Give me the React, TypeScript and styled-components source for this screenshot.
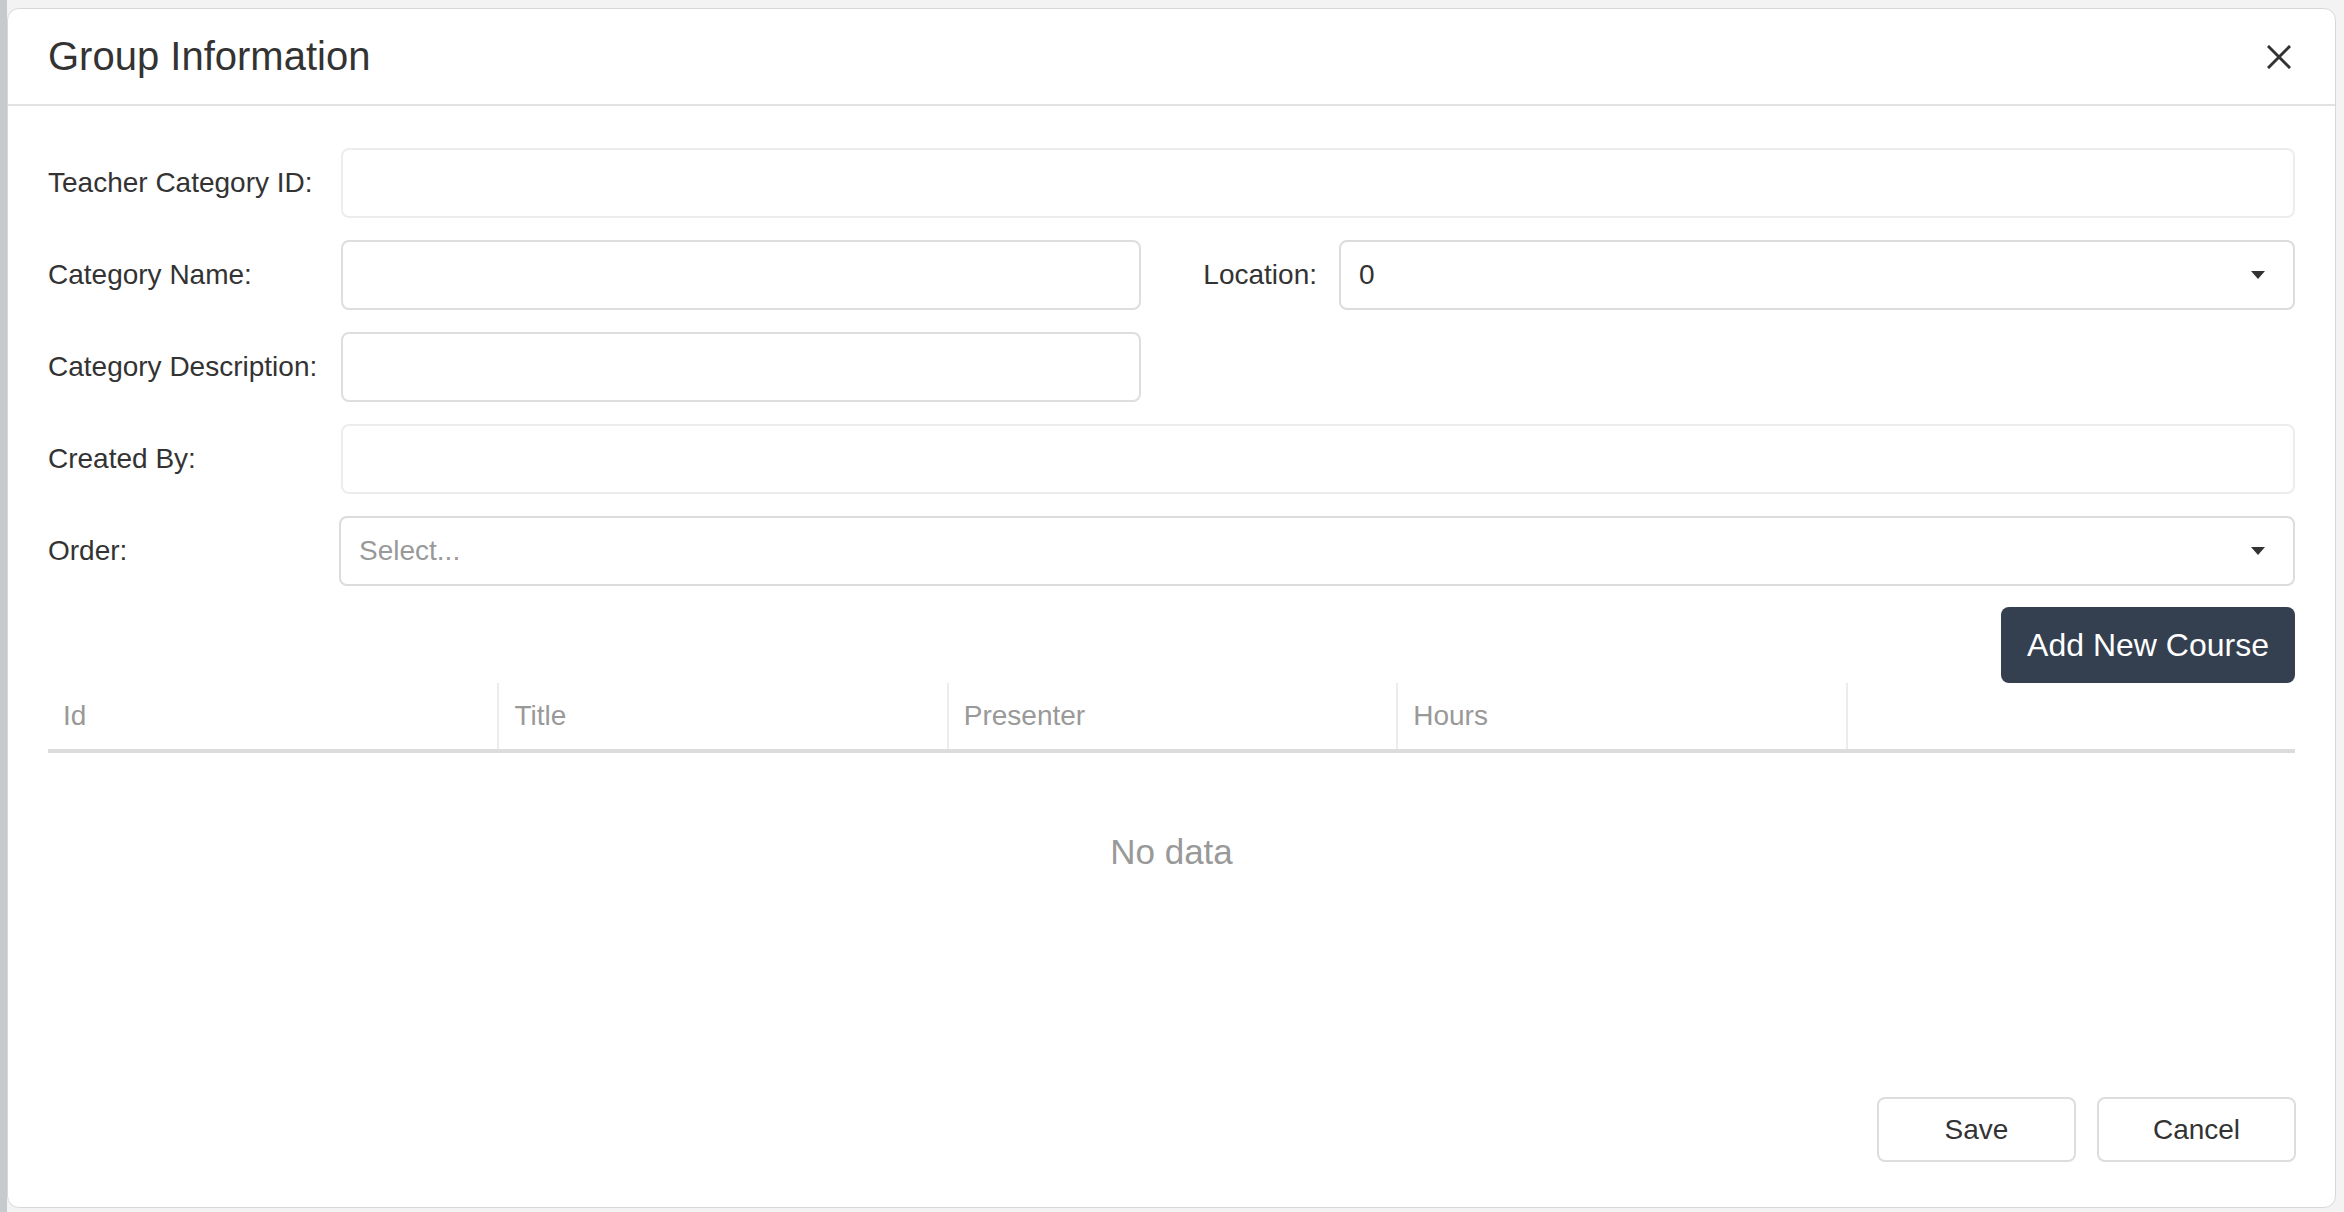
import styled, { createGlobalStyle } from "styled-components";

const GlobalStyle = createGlobalStyle`
  html, body {
    margin: 0;
    padding: 0;
  }
  body {
    font-family: "Liberation Sans", Arial, sans-serif;
    color: #333;
  }
  * {
    box-sizing: border-box;
  }
`;

const Backdrop = styled.div`
  height: 100vh;
  padding: 8px 8px 4px 7px;
  background: linear-gradient(to right, #c6cacd 0 7px, #f3f3f3 7px);
  display: flex;
`;

const Modal = styled.div`
  flex: 1;
  display: flex;
  flex-direction: column;
  background: #fff;
  border: 1px solid #d8d8d8;
  border-radius: 12px;
  overflow: hidden;
`;

const Header = styled.div`
  height: 97px;
  padding: 0 44px 0 40px;
  display: flex;
  align-items: center;
  justify-content: space-between;
  border-bottom: 2px solid #e2e2e2;
`;

const Title = styled.h2`
  margin: 0;
  font-size: 40px;
  font-weight: 400;
  color: #333;
`;

const CloseButton = styled.button`
  border: 0;
  background: none;
  padding: 0;
  width: 24px;
  height: 24px;
  display: flex;
  cursor: pointer;
`;

const Body = styled.div`
  flex: 1;
  padding: 42px 40px 0 40px;
  display: flex;
  flex-direction: column;
`;

const Row = styled.div`
  display: flex;
  align-items: center;
  height: 70px;
  margin-bottom: 22px;
`;

const Label = styled.label`
  width: 293px;
  flex-shrink: 0;
  font-size: 28px;
  color: #333;
`;

const SideLabel = styled(Label)`
  width: 198px;
  padding-right: 22px;
  text-align: right;
`;

const Input = styled.input<{ $half?: boolean; $muted?: boolean }>`
  height: 70px;
  flex: ${(p) => (p.$half ? "0 0 800px" : "1")};
  border: 2px solid ${(p) => (p.$muted ? "#ededed" : "#dedede")};
  border-radius: 8px;
  background: #fff;
  padding: 0 18px;
  font: inherit;
  font-size: 28px;
  outline: none;
`;

const Select = styled.div<{ $placeholder?: boolean; $shift?: number }>`
  flex: 1;
  height: 70px;
  margin-left: ${(p) => p.$shift ?? 0}px;
  border: 2px solid #dcdcdc;
  border-radius: 8px;
  padding: 0 28px 0 18px;
  display: flex;
  align-items: center;
  justify-content: space-between;
  font-size: 28px;
  color: ${(p) => (p.$placeholder ? "#999" : "#333")};
`;

const Arrow = () => (
  <svg width="14" height="8" viewBox="0 0 14 8">
    <path d="M0 0 H14 L7 8 Z" fill="#333" />
  </svg>
);

const ActionRow = styled.div`
  display: flex;
  justify-content: flex-end;
  margin-top: -1px;
`;

const DarkButton = styled.button`
  height: 76px;
  padding: 0 26px;
  border: 0;
  border-radius: 8px;
  background: #343f4f;
  color: #fff;
  font: inherit;
  font-size: 32px;
  cursor: pointer;
`;

const Table = styled.div`
  display: flex;
  flex-direction: column;
`;

const HeadRow = styled.div`
  display: grid;
  grid-template-columns: repeat(5, 1fr);
  border-bottom: 4px solid #dcdcdc;
`;

const HeadCell = styled.div<{ $first?: boolean }>`
  height: 66px;
  display: flex;
  align-items: center;
  padding-left: 15px;
  font-size: 28px;
  color: #999;
  border-left: ${(p) => (p.$first ? "0" : "2px solid #ececec")};
`;

const Empty = styled.div`
  height: 198px;
  display: flex;
  align-items: center;
  justify-content: center;
  font-size: 35px;
  color: #999;
`;

const Footer = styled.div`
  display: flex;
  justify-content: flex-end;
  gap: 21px;
  padding: 0 39px 45px 40px;
`;

const OutlineButton = styled.button`
  width: 199px;
  height: 65px;
  border: 2px solid #dddddd;
  border-radius: 8px;
  background: #fff;
  font: inherit;
  font-size: 28px;
  color: #333;
  cursor: pointer;
`;

const columns = ["Id", "Title", "Presenter", "Hours", ""];

export default function App() {
  return (
    <>
      <GlobalStyle />
      <Backdrop>
        <Modal>
          <Header>
            <Title>Group Information</Title>
            <CloseButton aria-label="Close">
              <svg width="24" height="24" viewBox="0 0 24 24">
                <path d="M2 2 L22 22 M22 2 L2 22" stroke="#333" strokeWidth="3" strokeLinecap="square" />
              </svg>
            </CloseButton>
          </Header>
          <Body>
            <Row>
              <Label>Teacher Category ID:</Label>
              <Input $muted readOnly />
            </Row>
            <Row>
              <Label>Category Name:</Label>
              <Input $half />
              <SideLabel>Location:</SideLabel>
              <Select>
                <span>0</span>
                <Arrow />
              </Select>
            </Row>
            <Row>
              <Label>Category Description:</Label>
              <Input $half />
            </Row>
            <Row>
              <Label>Created By:</Label>
              <Input $muted readOnly />
            </Row>
            <Row>
              <Label>Order:</Label>
              <Select $placeholder $shift={-2}>
                <span>Select...</span>
                <Arrow />
              </Select>
            </Row>
            <ActionRow>
              <DarkButton>Add New Course</DarkButton>
            </ActionRow>
            <Table>
              <HeadRow>
                {columns.map((c, i) => (
                  <HeadCell key={i} $first={i === 0}>
                    {c}
                  </HeadCell>
                ))}
              </HeadRow>
              <Empty>No data</Empty>
            </Table>
          </Body>
          <Footer>
            <OutlineButton>Save</OutlineButton>
            <OutlineButton>Cancel</OutlineButton>
          </Footer>
        </Modal>
      </Backdrop>
    </>
  );
}
